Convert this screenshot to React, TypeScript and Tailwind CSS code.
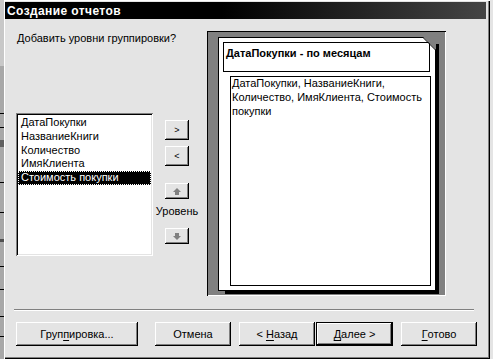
import React from "react"

const fields = ["ДатаПокупки", "НазваниеКниги", "Количество", "ИмяКлиента", "Стоимость покупки"]

function Btn({ children, className = "" }: { children: React.ReactNode; className?: string }) {
  return (
    <div
      className={`flex items-center justify-center bg-[#e4e4e4] shadow-[inset_-1px_-1px_#000,inset_1px_1px_#fff,inset_-2px_-2px_#808080] ${className}`}
    >
      {children}
    </div>
  )
}

function Arrow({ down = false }: { down?: boolean }) {
  return (
    <svg width="8" height="7" viewBox="0 0 8 7" className={down ? "rotate-180" : ""}>
      <polygon points="4,0 8,4 6,4 6,7 2,7 2,4 0,4" fill="#808080" />
    </svg>
  )
}

export default function App() {
  return (
    <div className="flex h-[359px] w-[493px] overflow-hidden bg-[#e4e4e4] font-['Liberation_Sans',Arial,sans-serif] text-[11px] leading-[14px] text-black">
      {/* window behind */}
      <div className="flex w-[4px] flex-col bg-[#a8a8a8]">
        <div className="h-[66px] bg-[#c8c8c8]" />
        <div className="mt-[47px] h-px bg-black" />
        <div className="mt-[13px] h-px bg-black" />
        <div className="mt-[12px] h-[7px] bg-[#606060]" />
        <div className="mt-[35px] h-px bg-black" />
        <div className="mt-[29px] h-px bg-black" />
        <div className="mt-[26px] h-[3px] bg-[#505050]" />
        <div className="mt-[24px] h-px bg-black" />
        <div className="mt-[22px] h-px bg-black" />
        <div className="mt-[26px] h-px bg-black" />
        <div className="mt-[19px] h-px bg-black" />
      </div>

      {/* dialog */}
      <div className="flex w-[486px] flex-col pb-[2px] pl-px pr-[4px] pt-[2px] shadow-[inset_1px_1px_#fff,inset_-1px_-1px_#000,inset_-2px_-2px_#808080]">
        <div className="flex h-[17px] items-center bg-[linear-gradient(to_right,#000_45%,#454545)] pl-[2px] text-[12px] font-bold tracking-[0.4px] text-white">
          Создание отчетов
        </div>

        <div className="flex pt-[12px]">
          <div className="flex w-[202px] flex-col pl-[11px]">
            <div className="ml-px">Добавить уровни группировки?</div>
            <div className="mt-[68px] flex">
              <div className="flex h-[143px] w-[137px] flex-col bg-white px-[2px] pt-[3px] shadow-[inset_1px_1px_#808080,inset_-1px_-1px_#fff,inset_2px_2px_#000,inset_-2px_-2px_#e4e4e4]">
                {fields.map((f, i) => (
                  <div
                    key={f}
                    className={`h-[13.75px] pl-[3px] leading-[13.75px] ${
                      i === 4 ? "bg-black text-white outline-1 -outline-offset-1 outline-dotted outline-white" : ""
                    }`}
                  >
                    {f}
                  </div>
                ))}
              </div>
              <div className="flex w-[48px] flex-col items-center pt-[7px]">
                <Btn className="h-[20px] w-[24px] text-[9px]">&gt;</Btn>
                <Btn className="mt-[6px] h-[20px] w-[24px] text-[9px]">&lt;</Btn>
                <Btn className="mt-[17px] h-[16px] w-[24px]">
                  <Arrow />
                </Btn>
                <div className="mt-[5px]">Уровень</div>
                <Btn className="mt-[10px] h-[16px] w-[24px]">
                  <Arrow down />
                </Btn>
              </div>
            </div>
          </div>

          {/* preview */}
          <div className="h-[265px] w-[239px] bg-[#808080] pl-[11px] pt-[6px] shadow-[inset_1px_1px_#000,inset_-1px_-1px_#fff]">
            <div className="relative flex h-[254px] w-[218px] flex-col border border-black bg-white pl-[4px] pt-[4px] shadow-[5px_5px_0_-2px_#000]">
              <svg width="13" height="13" viewBox="0 0 13 13" className="absolute -right-px -top-px">
                <polygon points="0,0 13,0 13,13" fill="#808080" />
                <line x1="0" y1="0.5" x2="12.5" y2="13" stroke="#000" />
              </svg>
              <div className="h-[30px] w-[207px] border border-black pl-[2px] pt-[3px] font-bold">
                ДатаПокупки - по месяцам
              </div>
              <div className="ml-[7px] mt-[4px] h-[210px] w-[201px] border border-black pl-px leading-[13.75px]">
                <div>ДатаПокупки, НазваниеКниги,</div>
                <div>Количество, ИмяКлиента, Стоимость</div>
                <div>покупки</div>
              </div>
            </div>
          </div>
        </div>

        <div className="ml-[9px] mt-[13px] h-[2px] w-[460px] border-b border-t border-b-white border-t-[#808080]" />

        <div className="mt-[11px] flex pl-[11px]">
          <Btn className="h-[24px] w-[122px]">
            Груп<span className="underline underline-offset-2">п</span>ировка...
          </Btn>
          <Btn className="ml-[17px] h-[24px] w-[76px]">Отмена</Btn>
          <Btn className="ml-[8px] h-[24px] w-[76px]">
            &lt;&nbsp;<span className="underline underline-offset-2">Н</span>азад
          </Btn>
          <Btn className="ml-px h-[24px] w-[77px] border border-black">
            <span className="underline underline-offset-2">Д</span>алее &gt;
          </Btn>
          <Btn className="ml-[8px] h-[24px] w-[76px]">
            <span className="underline underline-offset-2">Г</span>отово
          </Btn>
        </div>
      </div>

      <div className="w-[3px] bg-[#e4e4e4]" />
    </div>
  )
}
